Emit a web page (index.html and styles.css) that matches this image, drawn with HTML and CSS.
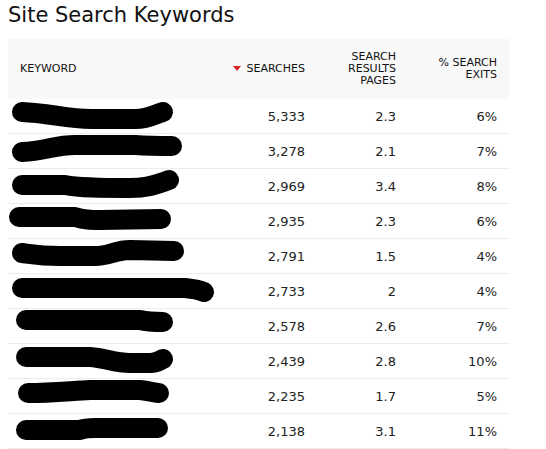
FILE: index.html
```html
<!DOCTYPE html>
<html lang="en">
<head>
    <meta charset="UTF-8">
    <title>Site Search Keywords</title>
    <link rel="stylesheet" href="styles.css">
</head>
<body>

<h1>Site Search Keywords</h1>

<table class="keywords">
    <colgroup>
        <col class="col-keyword">
        <col class="col-searches">
        <col class="col-pages">
        <col class="col-exits">
    </colgroup>
    <thead>
        <tr>
            <th class="left">Keyword</th>
            <th><span class="sort-arrow"></span>Searches</th>
            <th>Search<br>Results<br>Pages</th>
            <th>% Search<br>Exits</th>
        </tr>
    </thead>
    <tbody>
        <tr>
            <td class="left"><svg class="redact" viewBox="8 0 220 34"><path d="M22 13 C50 14 70 21 95 20 L135 20 C150 20 155 15 163 13"/></svg></td>
            <td>5,333</td><td>2.3</td><td>6%</td>
        </tr>
        <tr>
            <td class="left"><svg class="redact" viewBox="8 0 220 34"><path d="M22 18 C45 17 55 11 75 11 L135 11 C150 12 160 12 172 12"/></svg></td>
            <td>3,278</td><td>2.1</td><td>7%</td>
        </tr>
        <tr>
            <td class="left"><svg class="redact" viewBox="8 0 220 34"><path d="M22 16 L65 16 C80 19 100 19 130 19 C150 19 160 14 169 11"/></svg></td>
            <td>2,969</td><td>3.4</td><td>8%</td>
        </tr>
        <tr>
            <td class="left"><svg class="redact" viewBox="8 0 220 34"><path d="M19 13 L75 13 C85 16 90 16 100 16 L161 15"/></svg></td>
            <td>2,935</td><td>2.3</td><td>6%</td>
        </tr>
        <tr>
            <td class="left"><svg class="redact" viewBox="8 0 220 34"><path d="M22 14 C30 15 40 17 60 17 L95 17 C110 17 115 11 130 11 L174 12"/></svg></td>
            <td>2,791</td><td>1.5</td><td>4%</td>
        </tr>
        <tr>
            <td class="left"><svg class="redact" viewBox="8 0 220 34"><path d="M22 14 L185 14 C195 15 200 16 204 18"/></svg></td>
            <td>2,733</td><td>2</td><td>4%</td>
        </tr>
        <tr>
            <td class="left"><svg class="redact" viewBox="8 0 220 34"><path d="M26 11 L140 11 C148 13 152 13 163 13"/></svg></td>
            <td>2,578</td><td>2.6</td><td>7%</td>
        </tr>
        <tr>
            <td class="left"><svg class="redact" viewBox="8 0 220 34"><path d="M26 13 L90 13 C105 14 115 19 130 19 L150 19 C158 19 160 16 163 15"/></svg></td>
            <td>2,439</td><td>2.8</td><td>10%</td>
        </tr>
        <tr>
            <td class="left"><svg class="redact" viewBox="8 0 220 34"><path d="M28 14 C50 14 70 12 90 11 L140 11 C150 12 155 14 159 14"/></svg></td>
            <td>2,235</td><td>1.7</td><td>5%</td>
        </tr>
        <tr>
            <td class="left"><svg class="redact" viewBox="8 0 220 34"><path d="M26 16 L80 16 C85 14 90 14 95 14 L158 14"/></svg></td>
            <td>2,138</td><td>3.1</td><td>11%</td>
        </tr>
    </tbody>
</table>

</body>
</html>
```

FILE: styles.css
```css
body {
    margin: 0;
    padding: 0 8px;
    font-family: "DejaVu Sans", Verdana, sans-serif;
    color: #222;
    background-color: #fff;
}

h1 {
    margin: 0;
    height: 39px;
    font-size: 21px;
    font-weight: normal;
    line-height: 30px;
    color: #111;
}

.keywords {
    width: 502px;
    border-collapse: collapse;
    table-layout: fixed;
}

.col-keyword {
    width: 192px;
}

.col-searches {
    width: 117px;
}

.col-pages {
    width: 91px;
}

.col-exits {
    width: 102px;
}

.keywords th {
    height: 60px;
    padding: 0 12px;
    background-color: #f8f8f8;
    font-size: 11px;
    font-weight: normal;
    line-height: 12px;
    text-transform: uppercase;
    text-align: right;
    vertical-align: middle;
    color: #111;
}

.keywords td {
    height: 34px;
    padding: 0 12px;
    border-bottom: 1px solid #ececec;
    font-size: 13px;
    text-align: right;
    vertical-align: middle;
}

.keywords th:last-child,
.keywords td:last-child {
    padding-right: 13px;
}

.keywords .left {
    text-align: left;
}

.keywords td.left {
    padding: 0;
}

.sort-arrow {
    display: inline-block;
    width: 0;
    height: 0;
    margin-right: 6px;
    border-left: 4px solid transparent;
    border-right: 4px solid transparent;
    border-top: 5px solid #d32222;
    vertical-align: 1px;
}

.redact {
    display: block;
    width: 220px;
    height: 34px;
}

.redact path {
    fill: none;
    stroke: #000;
    stroke-width: 20;
    stroke-linecap: round;
    stroke-linejoin: round;
}
```
